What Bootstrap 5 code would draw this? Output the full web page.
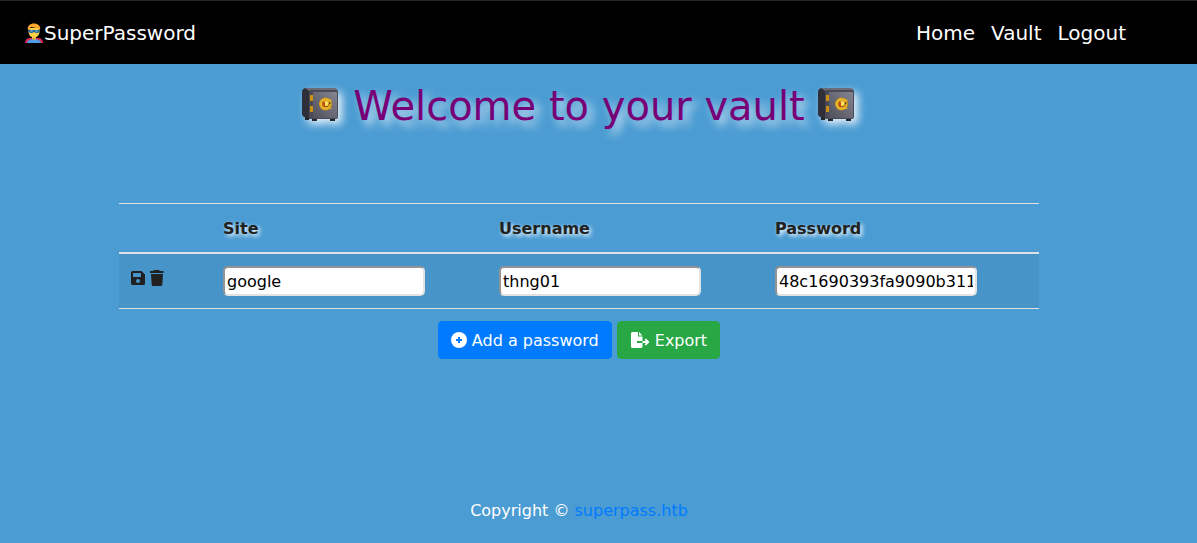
<!DOCTYPE html>
<html lang="en">
<head>
<meta charset="utf-8">
<meta name="viewport" content="width=device-width, initial-scale=1">
<title>SuperPassword</title>
<link href="https://cdn.jsdelivr.net/npm/bootstrap@5.3.0/dist/css/bootstrap.min.css" rel="stylesheet">
<style>
body { background: #4b9cd3; color: #212121; font-family: "DejaVu Sans", sans-serif; }
.topbar { background: #000; border-top: 1px solid #24242c; height: 64px; padding: 0 63px 0 24px; font-size: 20px; }
.topbar a { color: #fff; }
.page-body { padding: 18px 39px 0 0; }
.page-foot { padding: 0 39px 20px 0; color: #fff; }
.page-foot a { color: #007bff; }
.title { font-size: 40px; line-height: 48px; color: #707; text-shadow: 5px 5px 10px rgba(255,255,255,.8); margin-bottom: 73px; gap: 12px; }
.title svg { filter: drop-shadow(4px 4px 4px rgba(255,255,255,.85)); margin-bottom: 4px; }
.vault-wrap { width: 100%; max-width: 920px; }
.vault { table-layout: fixed; border-color: #dee2e6; --bs-table-bg: transparent; --bs-table-color: #212121; --bs-table-striped-color: #212121; margin-bottom: 12px; }
.vault > :not(caption) > * > * { padding: 12px; }
.vault > thead > tr > th { border-top: 1px solid #dee2e6; border-bottom: 2px solid #dee2e6; text-shadow: 2px 2px 4px #fff; line-height: 24px; padding: 13px 12px 11px; }
.vault td { border-bottom: 1px solid #dee2e6; line-height: 24px; }
.vault .tools { width: 10%; }
.vault .field { width: 30%; }
.vault input { display: block; width: 202px; height: 30px; padding: 1px 2px; border: 2px solid; border-color: #949494 #e2e2e2 #e2e2e2 #949494; border-radius: 5px; background: #fff; color: #000; }
.tool { border: 0; padding: 0; background: none; color: #212121; line-height: 0; }
.actions, .actions .btn { gap: 5px; }
.actions .btn { border-radius: 4px; line-height: 24px; padding: 7px 12px 5px; }
.actions svg { margin-bottom: 2px; }
.btn-add { --bs-btn-bg: #007bff; --bs-btn-border-color: #007bff; --bs-btn-color: #fff; }
.btn-export { --bs-btn-bg: #28a745; --bs-btn-border-color: #28a745; --bs-btn-color: #fff; }
</style>
</head>
<body class="d-flex flex-column min-vh-100">
<svg class="position-absolute" width="0" height="0" aria-hidden="true">
  <defs>
    <linearGradient id="front" x1="1" y1="0" x2="0" y2="1"><stop offset="0" stop-color="#858592"/><stop offset="1" stop-color="#50505c"/></linearGradient>
    <radialGradient id="gold"><stop offset="0" stop-color="#ffe873"/><stop offset=".7" stop-color="#f0bd2c"/><stop offset="1" stop-color="#c88f12"/></radialGradient>
    <symbol id="safe" viewBox="0 0 40 40">
      <path d="M4 33h4v3H4zm7 0h5v4h-5zm18 0h5v4h-5z" fill="#25252d"/>
      <path d="M1 8q0-3 3-4h28l4 2-22 2-4 27-7-2q-2-1-2-3z" fill="#2e2f39"/>
      <path d="M4 4h29q3 0 4 3H8z" fill="#6b6c79"/>
      <rect x="8" y="6" width="29" height="29" rx="2" fill="#4a4a56"/>
      <rect x="12" y="8" width="24" height="26" rx="1" fill="url(#front)"/>
      <path d="M9 11h3v6H9zm0 11h3v6H9z" fill="#c9910f"/>
      <circle cx="24.500" cy="20" r="6.500" fill="url(#gold)"/>
      <path d="m28 15 3 1-2 2 1 2-1 3 2 2-4 0z" fill="#e3ac22"/>
      <circle cx="24.500" cy="20" r="3.500" fill="#a65b0c"/>
      <circle cx="25" cy="19.500" r="2.500" fill="#ffe45c"/>
      <path d="M22 18h2v4h-2z" fill="#d14d12"/>
      <path d="m28 18 2 1-2 2z" fill="#5d4a22"/>
    </symbol>
  </defs>
</svg>
<nav class="topbar d-flex align-items-center justify-content-between">
  <a class="d-flex align-items-center text-decoration-none" href="#">
    <svg width="20" height="20" viewBox="0 0 20 20" aria-hidden="true">
      <path d="M1 20c0-3 2-5 5-5h8c3 0 5 2 5 5z" fill="#d92550"/>
      <path d="M3 20c0-2 3-4 7-4s7 2 7 4z" fill="#4e9be6"/>
      <path d="M8 12h4v4q-2 2-4 0z" fill="#e8a83a"/>
      <path d="M4.500 5h11v3c0 4-2 6.500-5.500 6.500S4.500 12 4.500 8z" fill="#ffcf48"/>
      <path d="M4 7C3 3 6 .5 10 .5s7 2.500 6 6.500l-1.500-2C12 5 9 4.500 7 4L5 6z" fill="#ffa62b"/>
      <path d="M4.500 6.500q5.500 1 11 0V9q-3 2-5.500 0-2.500 2-5.500 0z" fill="#22659c"/>
      <path d="M6.500 8h2m3 0h2" stroke="#a9d3ea"/>
    </svg>SuperPassword</a>
  <div class="d-flex">
    <a class="px-2 text-decoration-none" href="#">Home</a>
    <a class="px-2 text-decoration-none" href="#">Vault</a>
    <a class="px-2 text-decoration-none" href="#">Logout</a>
  </div>
</nav>
<main class="page-body d-flex flex-column align-items-center">
  <h1 class="title fw-normal d-flex align-items-center justify-content-center">
    <svg width="40" height="40" aria-hidden="true"><use href="#safe"/></svg>
    <span>Welcome to your vault</span>
    <svg width="40" height="40" aria-hidden="true"><use href="#safe"/></svg>
  </h1>
  <div class="vault-wrap">
    <table class="table table-striped vault">
      <thead>
        <tr><th class="tools"></th><th class="field" id="site">Site</th><th class="field" id="user">Username</th><th class="field" id="pass">Password</th></tr>
      </thead>
      <tbody>
        <tr>
          <td><div class="d-flex gap-1">
            <button class="tool" type="button" aria-label="Save"><svg width="14" height="24" viewBox="0 0 14 24"><path fill="currentColor" fill-rule="evenodd" d="M1.500 5H10.500L14 8.500V17.500Q14 19 12.500 19H1.500Q0 19 0 17.500V6.500Q0 5 1.500 5zM2.500 7Q2 7 2 7.500V10.500Q2 11 2.500 11H9.500Q10 11 10 10.500V7.500Q10 7 9.500 7zM7 13a2 2 0 1 0 0 4a2 2 0 1 0 0-4z"/></svg></button>
            <button class="tool" type="button" aria-label="Delete"><svg width="16" height="24" viewBox="0 0 16 24"><path fill="currentColor" d="M5 4h5l1 1h3.500v2H1V5h3zM2 8h12l-.7 10.500Q13.200 20 11.800 20H4.200Q2.800 20 2.700 18.500z"/></svg></button>
          </div></td>
          <td><input type="text" value="google" aria-labelledby="site"></td>
          <td><input type="text" value="thng01" aria-labelledby="user"></td>
          <td><input type="text" value="48c1690393fa9090b311" aria-labelledby="pass"></td>
        </tr>
      </tbody>
    </table>
    <div class="actions d-flex justify-content-center">
      <button class="btn btn-add d-flex align-items-center" type="button">
        <svg width="16" height="16" viewBox="0 0 16 16" aria-hidden="true"><path fill="currentColor" fill-rule="evenodd" d="M8 0a8 8 0 1 1 0 16A8 8 0 0 1 8 0zM7 5v2H5v2h2v2h2V9h2V7H9V5z"/></svg>
        <span>Add a password</span></button>
      <button class="btn btn-export d-flex align-items-center" type="button">
        <svg width="20" height="16" viewBox="0 0 20 16" aria-hidden="true"><path fill="currentColor" d="M2.500 0H8v4.500h4.500V9H7v2h5.500v3.500q0 1.500-1.500 1.500H2.500Q1 16 1 14.500v-13Q1 0 2.500 0zM9 0l3.500 3.500H9zM12.500 9H16L14.500 7.500 16 6.500l3.500 3.500-3.500 3.500-1.500-1L16 11h-3.500z"/></svg>
        <span>Export</span></button>
    </div>
  </div>
</main>
<footer class="page-foot mt-auto text-center">Copyright © <a class="text-decoration-none" href="#">superpass.htb</a></footer>
<script src="https://cdn.jsdelivr.net/npm/bootstrap@5.3.0/dist/js/bootstrap.bundle.min.js"></script>
</body>
</html>
